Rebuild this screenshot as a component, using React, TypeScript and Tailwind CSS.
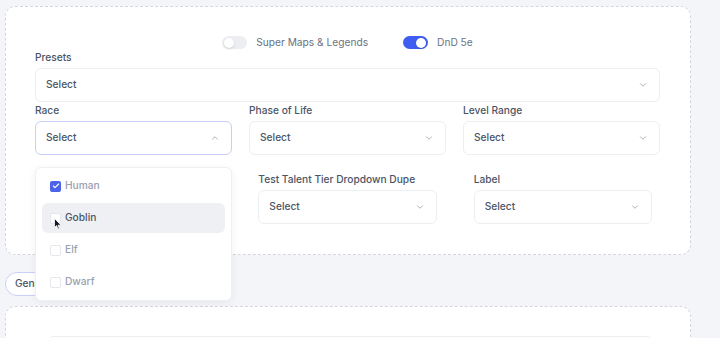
import { ChevronDown, ChevronUp, Check } from "lucide-react";

type ToggleProps = {
  on: boolean;
  label: string;
};

const Toggle = ({ on, label }: ToggleProps) => (
  <div className="flex h-[13px] items-center gap-[9px]">
    <div
      className={
        on
          ? "flex h-[13px] w-[25px] items-center justify-end rounded-full bg-[#3f5ef0] px-[2px]"
          : "flex h-[13px] w-[25px] items-center justify-start rounded-full bg-[#eceef1] px-[2px]"
      }
    >
      <div className="h-[10px] w-[10px] rounded-full bg-white shadow-sm" />
    </div>
    <span className="text-[10.2px] leading-[13px] text-gray-500">{label}</span>
  </div>
);

type SelectBoxProps = {
  open?: boolean;
};

const SelectBox = ({ open }: SelectBoxProps) => (
  <div
    className={
      open
        ? "flex h-[34px] items-center justify-between rounded-md border border-[#c7cef7] bg-white pl-[10px] pr-[11px]"
        : "flex h-[34px] items-center justify-between rounded-md border border-[#eceef1] bg-white pl-[10px] pr-[11px]"
    }
  >
    <span className="text-[10.2px] font-medium text-gray-600">Select</span>
    {open ? (
      <ChevronUp className="h-[10px] w-[10px] text-gray-400" strokeWidth={2} />
    ) : (
      <ChevronDown className="h-[10px] w-[10px] text-gray-400" strokeWidth={2} />
    )}
  </div>
);

type FieldProps = {
  label: string;
  open?: boolean;
};

const Field = ({ label, open }: FieldProps) => (
  <div className="flex flex-col gap-[3px]">
    <label className="h-[16px] text-[10.2px] font-medium leading-[16px] text-gray-600">
      {label}
    </label>
    <SelectBox open={open} />
  </div>
);

const races = [
  { name: "Human", checked: true },
  { name: "Goblin", checked: false, hover: true },
  { name: "Elf", checked: false },
  { name: "Dwarf", checked: false },
];

const Cursor = () => (
  <svg
    className="absolute left-[12px] top-[15px]"
    width="8"
    height="12"
    viewBox="0 0 8 12"
  >
    <path
      d="M0.5 0.5 L0.5 9.5 L2.6 7.6 L4 11 L5.4 10.4 L4 7.2 L7 7.2 Z"
      fill="#111827"
      stroke="#ffffff"
      strokeWidth="0.8"
    />
  </svg>
);

const RaceMenu = () => (
  <div className="absolute left-0 top-[65px] z-10 flex w-full flex-col gap-[2px] rounded-md border border-[#eef0f3] bg-white px-[6px] py-[3px] shadow-[0_2px_8px_rgba(0,0,0,0.06)]">
    {races.map((race) => (
      <div
        key={race.name}
        className={
          race.hover
            ? "relative flex h-[30px] items-center gap-[4px] rounded-md bg-[#eef0f3] pl-[8px]"
            : "relative flex h-[30px] items-center gap-[4px] rounded-md pl-[8px]"
        }
      >
        {race.checked ? (
          <div className="flex h-[11px] w-[11px] items-center justify-center rounded-[2px] bg-[#4a63e8]">
            <Check className="h-[8px] w-[8px] text-white" strokeWidth={3.5} />
          </div>
        ) : (
          <div className="h-[11px] w-[11px] rounded-[2px] border border-[#e5e7eb] bg-white" />
        )}
        <span
          className={
            race.hover
              ? "text-[10.2px] font-medium text-gray-600"
              : "text-[10.2px] font-medium text-gray-400"
          }
        >
          {race.name}
        </span>
        {race.hover && <Cursor />}
      </div>
    ))}
  </div>
);

export default function App() {
  return (
    <div
      className="h-[338px] w-[720px] overflow-hidden bg-[#f4f5f8] pl-[5px] pt-[6px]"
      style={{ fontFamily: "Inter, 'Noto Sans', sans-serif" }}
    >
      <div className="w-[686px] rounded-[10px] border border-dashed border-[#d4d6dc] bg-white pb-[30px] pl-[29px] pr-[30px] pt-[29px]">
        <div className="flex justify-center gap-[35px]">
          <Toggle on={false} label="Super Maps & Legends" />
          <Toggle on={true} label="DnD 5e" />
        </div>

        <Field label="Presets" />

        <div className="grid grid-cols-3 gap-x-[17px]">
          <div className="relative">
            <Field label="Race" open />
            <RaceMenu />
          </div>
          <Field label="Phase of Life" />
          <Field label="Level Range" />
        </div>

        <div className="mt-[16px] grid grid-cols-3 gap-x-[37px] px-[8px]">
          <div />
          <Field label="Test Talent Tier Dropdown Dupe" />
          <Field label="Label" />
        </div>
      </div>

      <div className="mt-[17px] flex">
        <button className="h-[24px] rounded-full border border-[#c9d1f8] bg-white px-[9px] text-[10.2px] font-medium text-gray-600">
          Generate
        </button>
      </div>

      <div className="mt-[10px] h-[60px] w-[686px] rounded-[10px] border border-dashed border-[#d4d6dc] bg-white pl-[42px] pr-[37px] pt-[29px]">
        <div className="h-[20px] rounded-t-md border-t border-[#eceef1]" />
      </div>
    </div>
  );
}
